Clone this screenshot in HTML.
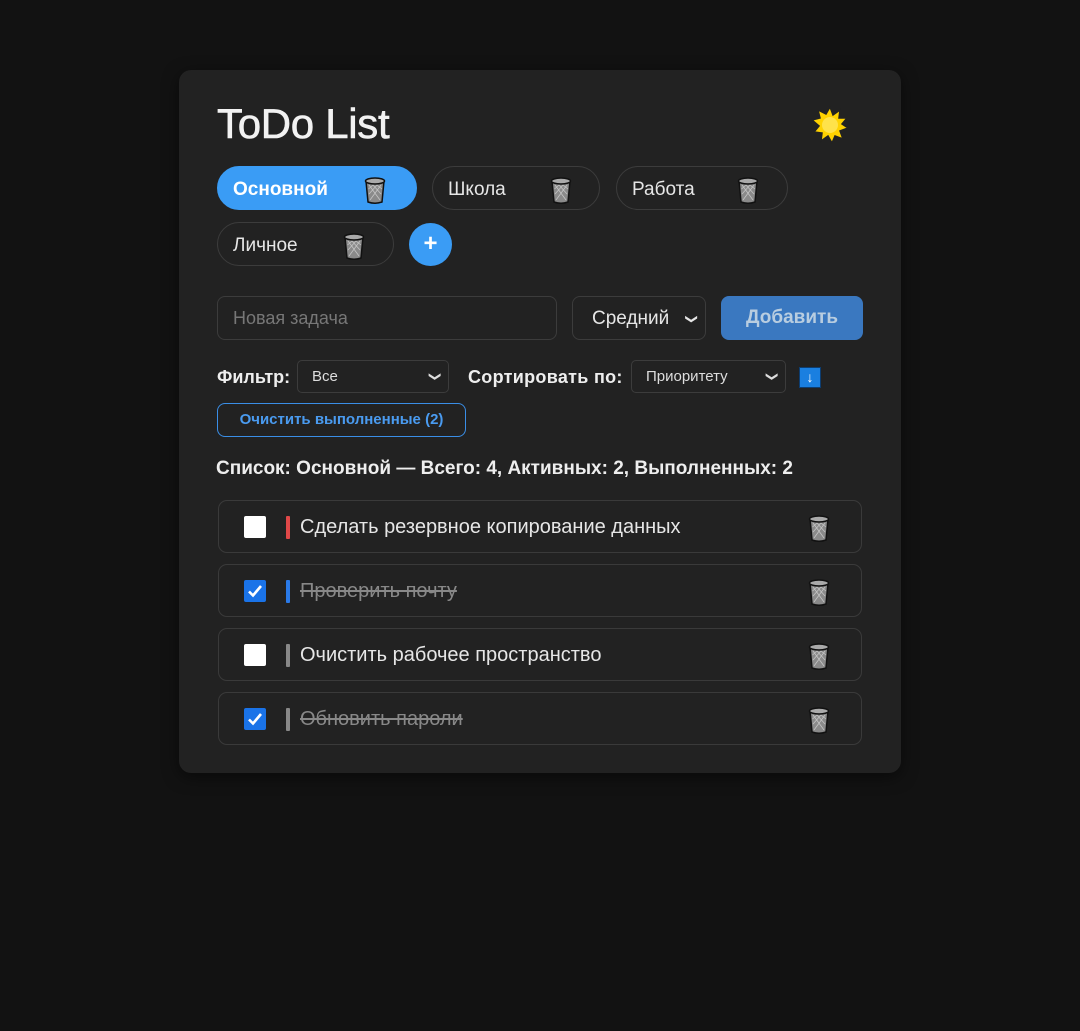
<!DOCTYPE html>
<html><head><meta charset="utf-8"><style>
*{box-sizing:border-box;margin:0;padding:0}
body{width:1080px;height:1031px;background:#121212;font-family:"Liberation Sans",Arial,sans-serif;color:#e8e8e8;position:relative;overflow:hidden}
.card{position:absolute;left:179px;top:70px;width:722px;height:703px;background:#222;border-radius:12px;box-shadow:0 4px 16px rgba(0,0,0,.5)}
.a{position:absolute}
h1{position:absolute;left:217px;top:100px;font-size:42px;font-weight:normal;color:#f2f2f2;letter-spacing:-0.3px;-webkit-text-stroke:0.6px #f2f2f2}
.tab{position:absolute;height:44px;border:1px solid #3c3c3c;border-radius:22px;font-size:19px;color:#e6e6e6;padding-left:15px;line-height:45px}
.tab.on{background:#3a9cf5;border-color:#3a9cf5;color:#fff;font-weight:bold}
.tab svg{position:absolute;top:9px}
.plus{position:absolute;left:409px;top:223px;width:43px;height:43px;border-radius:50%;background:#3a9cf5;color:#fff;font-size:24px;text-align:center;line-height:41px;font-weight:bold}
.box{position:absolute;border:1px solid #3c3c3c;border-radius:8px;background:#222}
.lbl{position:absolute;font-size:18px;font-weight:bold;color:#eee}
.sel{position:absolute;border:1px solid #3c3c3c;border-radius:5px;font-size:15px;color:#ddd;padding-left:14px;line-height:31px;height:33px;background:#222}
.chev{position:absolute;right:8px;top:0;font-size:12px}
.item{position:absolute;left:218px;width:644px;height:53px;border:1px solid #3a3a3a;border-radius:9px}
.cb{position:absolute;left:25px;top:15px;width:22px;height:22px;border-radius:2px;background:#fff}
.cb.ck{background:#1a73e8}
.bar{position:absolute;left:67px;top:15px;width:4px;height:23px;border-radius:1px}
.it{position:absolute;left:81px;top:15px;font-size:20px;color:#e6e6e6}
.it.done{color:#888;text-decoration:line-through}
.item svg{position:absolute;left:589px;top:13px}
</style></head><body>
<svg width="0" height="0" style="position:absolute"><defs>
<symbol id="t" viewBox="0 0 22 28"><path d="M2 5 L4 26 Q11 28.5 18 26 L20 5 Z" fill="#8a8a8a" stroke="#111" stroke-width="1.5"/><ellipse cx="11" cy="5" rx="9.5" ry="3" fill="#aaa" stroke="#111" stroke-width="1.5"/><path d="M5 9 L16 24 M9 9 L17 18 M13 9 L18 13 M17 9 L6 24 M13 9 L5 18 M9 9 L4.5 13" stroke="#c4c4c4" stroke-width="0.8"/></symbol>
</defs></svg>
<div class="card"></div>
<h1>ToDo List</h1>
<svg class="a" style="left:811px;top:106px" width="38" height="38" viewBox="0 0 38 38"><polygon points="19,1 22,9 29,4 28,12 36,12 31,18 37,22 29,25 32,33 24,30 21,37 17,30 10,35 11,27 3,26 8,20 1,14 9,12 7,4 15,8" fill="#ffd200" stroke="#222" stroke-width="1.5"/><circle cx="19" cy="19" r="8" fill="#ffe24a"/></svg>
<div class="tab on" style="left:217px;top:166px;width:200px">Основной<svg style="left:146px" width="22" height="28"><use href="#t"/></svg></div>
<div class="tab" style="left:432px;top:166px;width:168px">Школа<svg style="left:117px" width="22" height="28"><use href="#t"/></svg></div>
<div class="tab" style="left:616px;top:166px;width:172px">Работа<svg style="left:120px" width="22" height="28"><use href="#t"/></svg></div>
<div class="tab" style="left:217px;top:222px;width:177px">Личное<svg style="left:125px" width="22" height="28"><use href="#t"/></svg></div>
<div class="plus">+</div>
<div class="box" style="left:217px;top:296px;width:340px;height:44px;font-size:18px;color:#777;padding-left:15px;line-height:42px">Новая задача</div>
<div class="box" style="left:572px;top:296px;width:134px;height:44px;font-size:19px;color:#e6e6e6;padding-left:19px;line-height:44px">Средний<span style="position:absolute;right:8px;top:0;font-size:12px;transform:rotate(90deg)">&#10095;</span></div>
<div class="a" style="left:721px;top:296px;width:142px;height:44px;border-radius:8px;background:#3a78c0;color:#b8cde0;font-size:19px;font-weight:bold;text-align:center;line-height:44px">Добавить</div>
<div class="lbl" style="left:217px;top:367px">Фильтр:</div>
<div class="sel" style="left:297px;top:360px;width:152px">Все<span class="chev" style="transform:rotate(90deg)">&#10095;</span></div>
<div class="lbl" style="left:468px;top:367px;letter-spacing:0.3px">Сортировать по:</div>
<div class="sel" style="left:631px;top:360px;width:155px">Приоритету<span class="chev" style="transform:rotate(90deg)">&#10095;</span></div>
<div class="a" style="left:799px;top:367px;width:22px;height:21px;background:#1a7fe0;border:1px solid #0d3d70;color:#fff;font-size:14px;text-align:center;line-height:19px">&#8595;</div>
<div class="a" style="left:217px;top:403px;width:249px;height:34px;border:1px solid #3a8ee6;border-radius:8px;color:#4a9bf0;font-size:15px;font-weight:bold;text-align:center;line-height:32px">Очистить выполненные (2)</div>
<div class="lbl" style="left:216px;top:458px;font-size:19px">Список: Основной — Всего: 4, Активных: 2, Выполненных: 2</div>
<div class="item" style="top:500px"><div class="cb"></div><div class="bar" style="background:#e04848"></div><div class="it">Сделать резервное копирование данных</div><svg width="22" height="28"><use href="#t"/></svg></div>
<div class="item" style="top:564px"><div class="cb ck"><svg style="position:absolute;left:3px;top:3px" width="16" height="16" viewBox="0 0 16 16"><path d="M2 8.5 L6 12.5 L14 3" stroke="#fff" stroke-width="2.6" fill="none"/></svg></div><div class="bar" style="background:#2a7ae8"></div><div class="it done">Проверить почту</div><svg width="22" height="28"><use href="#t"/></svg></div>
<div class="item" style="top:628px"><div class="cb"></div><div class="bar" style="background:#888"></div><div class="it">Очистить рабочее пространство</div><svg width="22" height="28"><use href="#t"/></svg></div>
<div class="item" style="top:692px"><div class="cb ck"><svg style="position:absolute;left:3px;top:3px" width="16" height="16" viewBox="0 0 16 16"><path d="M2 8.5 L6 12.5 L14 3" stroke="#fff" stroke-width="2.6" fill="none"/></svg></div><div class="bar" style="background:#888"></div><div class="it done">Обновить пароли</div><svg width="22" height="28"><use href="#t"/></svg></div>
</body></html>
